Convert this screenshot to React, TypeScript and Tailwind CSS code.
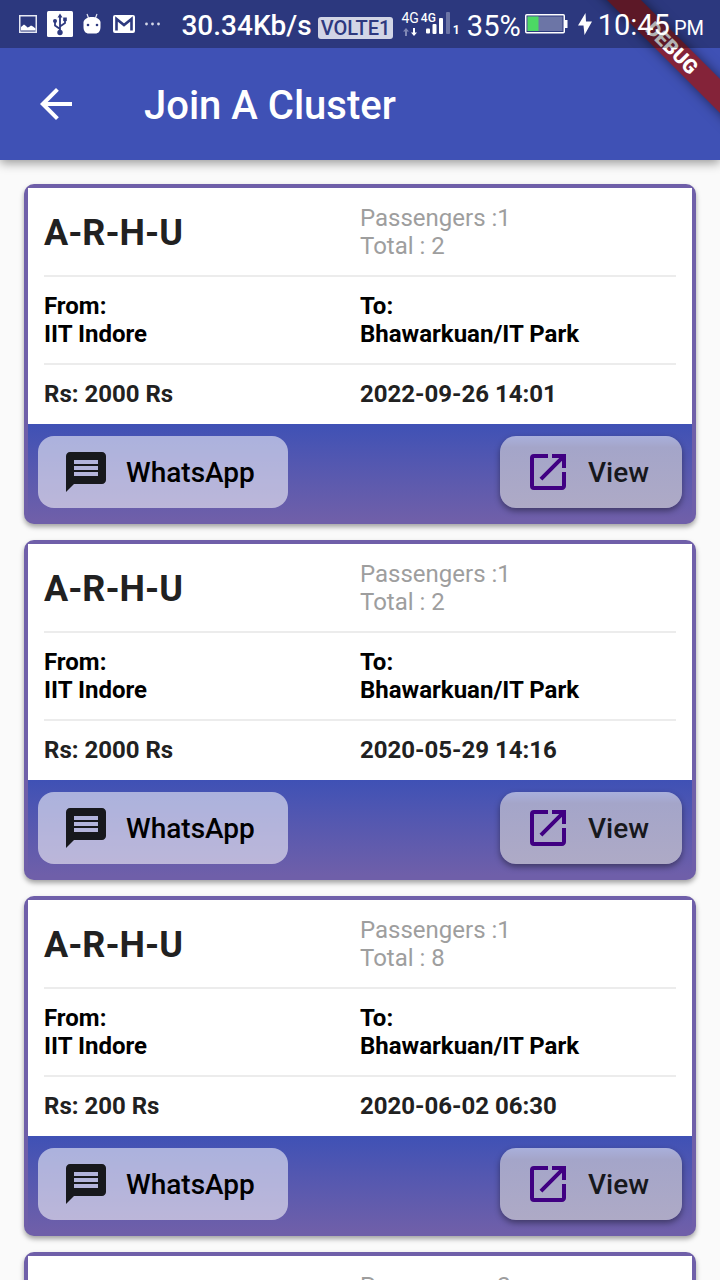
import { MdArrowBack, MdMessage, MdOpenInNew } from "react-icons/md";

type Cluster = {
  id: number;
  name: string;
  passengers: number;
  total: number;
  from: string;
  to: string;
  fare: number;
  time: string;
};

const clusters: Cluster[] = [
  { id: 1, name: "A-R-H-U", passengers: 1, total: 2, from: "IIT Indore", to: "Bhawarkuan/IT Park", fare: 2000, time: "2022-09-26 14:01" },
  { id: 2, name: "A-R-H-U", passengers: 1, total: 2, from: "IIT Indore", to: "Bhawarkuan/IT Park", fare: 2000, time: "2020-05-29 14:16" },
  { id: 3, name: "A-R-H-U", passengers: 1, total: 8, from: "IIT Indore", to: "Bhawarkuan/IT Park", fare: 200, time: "2020-06-02 06:30" },
  { id: 4, name: "A-R-H-U", passengers: 2, total: 8, from: "IIT Indore", to: "Bhawarkuan/IT Park", fare: 200, time: "2020-06-02 06:30" },
];

function NotificationIcons() {
  return (
    <div className="flex items-center">
      <svg width="18" height="18" viewBox="0 0 18 18" aria-hidden="true">
        <rect x="0.75" y="0.75" width="16.5" height="16.5" fill="none" stroke="#e6e8f3" strokeWidth="1.5" />
        <path d="M2 15.500v-3.500l3-2.500 2 1.500 1.500 1.500 1.500-.500 2-1.500 2 1 2.500 2v2z" fill="#fff" />
      </svg>
      <svg className="ml-2.5" width="26" height="26" viewBox="0 0 26 26" aria-hidden="true">
        <rect width="26" height="26" rx="1.5" fill="#fff" />
        <g stroke="#2d397f" strokeWidth="1.8" fill="none">
          <path d="M13 4v18M13 18l-5-3.500V10M13 15.500l5-3.500V8" />
        </g>
        <path d="M13 2.500l2.500 4h-5z" fill="#2d397f" />
        <circle cx="13" cy="21.500" r="2.700" fill="#2d397f" />
        <circle cx="8" cy="10" r="2" fill="#2d397f" />
        <rect x="16.200" y="6.500" width="3.600" height="3.600" fill="#2d397f" />
      </svg>
      <svg className="ml-2.5" width="18" height="22" viewBox="0 0 18 22" aria-hidden="true">
        <path d="M4 1l1.500 4M14 1l-1.500 4" stroke="#e6e8f3" strokeWidth="1.2" />
        <path d="M0.500 9C1.500 5.500 5 4 9 4s7.500 1.500 8.500 5v5c0 4.500-2.500 6.500-5 6.500h-7C3 20.500.500 18.500.500 14z" fill="#fff" />
        <circle cx="5" cy="12" r="1.300" fill="#2d397f" />
        <circle cx="14" cy="12" r="1.300" fill="#2d397f" />
      </svg>
      <svg className="ml-3" width="22" height="18" viewBox="0 0 22 18" aria-hidden="true">
        <rect width="22" height="18" rx="2" fill="#fff" />
        <path d="M3.500 15.500V4L11 10l7.500-6v11.500" fill="none" stroke="#2d397f" strokeWidth="2.600" />
      </svg>
      <svg className="ml-2.5" width="15" height="4" viewBox="0 0 15 4" aria-hidden="true">
        <circle cx="1.500" cy="2" r="1.400" fill="#d5d8e9" />
        <circle cx="7.500" cy="2" r="1.400" fill="#d5d8e9" />
        <circle cx="13.500" cy="2" r="1.400" fill="#d5d8e9" />
      </svg>
    </div>
  );
}

function SignalStrength() {
  return (
    <div className="flex">
      <div className="flex flex-col items-center">
        <span className="text-[14px] leading-3">4G</span>
        <svg className="mt-1" width="14" height="8" viewBox="0 0 14 8" aria-hidden="true">
          <path d="M3 0l3 3.500H4V8H2V3.500H0z" fill="#8088b5" />
          <path d="M11 8L8 4.500h2V0h2v4.500h2z" fill="#fff" />
        </svg>
      </div>
      <div className="relative ml-0.5 h-6 w-[46px]">
        <span className="absolute left-0 top-0 text-[12px] font-medium leading-3">4G</span>
        <svg className="absolute bottom-0.5 left-1" width="26" height="22" viewBox="0 0 26 22" aria-hidden="true">
          <rect x="1" y="16.500" width="4" height="5" rx="1" fill="#fff" />
          <rect x="7.500" y="12" width="4" height="10" rx="1" fill="#fff" />
          <rect x="14" y="6" width="4" height="16" rx="1" fill="#fff" />
          <rect x="21" y="0" width="4" height="22" rx="1" fill="#6c75a6" />
        </svg>
        <span className="absolute bottom-0.5 left-8 text-[12px] font-bold leading-2">1</span>
      </div>
    </div>
  );
}

function StatusBar() {
  return (
    <div className="relative z-20 flex h-12 items-center justify-between whitespace-nowrap bg-black/30 pl-[19px] pr-4 text-white">
      <NotificationIcons />
      <div className="flex items-center">
        <span className="pt-1 text-[28px] font-medium leading-8">30.34Kb/s</span>
        <span className="ml-1.5 mt-2 flex h-[22px] items-center rounded-[3px] bg-[#d2d5e6] px-[3px] text-[20px] font-medium leading-5 text-[#2d397f]">VOLTE1</span>
        <div className="ml-2">
          <SignalStrength />
        </div>
        <span className="pt-1 text-[29px] leading-8">35%</span>
        <svg className="ml-1" width="43" height="20" viewBox="0 0 43 20" aria-hidden="true">
          <rect x="0.750" y="0.750" width="38.500" height="18" rx="1" fill="none" stroke="#fff" strokeWidth="1.500" />
          <rect x="2.500" y="2.500" width="35" height="14.500" fill="#6c75a6" />
          <rect x="2.500" y="2.500" width="11" height="14.500" fill="#4cd964" />
          <rect x="39.500" y="6" width="3" height="8" fill="#fff" />
        </svg>
        <svg className="ml-2.5" width="14" height="22" viewBox="0 0 14 22" aria-hidden="true">
          <path d="M7.500 0L0 12.500h5.500L6.500 22 14 8.500H8z" fill="#fff" />
        </svg>
        <time className="ml-1.5 flex items-baseline gap-1 pt-1 text-[29px] leading-8">
          10:45 <span className="text-[20px]">PM</span>
        </time>
      </div>
    </div>
  );
}

function DebugRibbon() {
  return (
    <div className="pointer-events-none absolute right-0 top-0 z-10 size-40 overflow-hidden">
      <div className="absolute -right-[52px] top-9 flex h-6 w-50 rotate-45 items-center justify-center bg-[#842339] shadow-[0_0_12px_rgba(0,0,0,0.5)]">
        <span className="text-[20px] font-black leading-6 text-white">DEBUG</span>
      </div>
    </div>
  );
}

function ClusterCard({ cluster }: { cluster: Cluster }) {
  return (
    <article className="shrink-0 overflow-hidden rounded-[10px] bg-[#6f5fa9] p-1 shadow-[0_3px_5px_rgba(0,0,0,0.35)]">
      <div className="bg-white px-4 text-[24px] leading-7 text-[#212121]">
        <div className="grid h-[89px] grid-cols-2 items-center border-b-2 border-[#ececec] pt-px">
          <h2 className="pt-0.5 text-[36px] font-bold leading-10">{cluster.name}</h2>
          <p className="text-[#9e9e9e]">
            Passengers :{cluster.passengers}
            <br />
            Total : {cluster.total}
          </p>
        </div>
        <div className="grid h-22 grid-cols-2 items-center border-b-2 border-[#ececec] font-bold text-black">
          <p>
            From:
            <br />
            {cluster.from}
          </p>
          <p>
            To:
            <br />
            {cluster.to}
          </p>
        </div>
        <div className="grid h-[59px] grid-cols-2 items-center pb-px font-bold">
          <p>Rs: {cluster.fare} Rs</p>
          <p>{cluster.time}</p>
        </div>
      </div>
      <div className="flex justify-between bg-linear-to-b from-[#3f51b5] to-[#6f5fa9] px-2.5 py-3 text-[28px] font-medium">
        <button type="button" className="flex h-18 items-center gap-4 rounded-2xl bg-white/55 pl-6 pr-[33px] text-black">
          <MdMessage className="size-12 text-[#17181c]" aria-hidden="true" />
          <span className="pt-0.5">WhatsApp</span>
        </button>
        <button type="button" className="flex h-18 items-center gap-4 rounded-2xl bg-[linear-gradient(#a9b0dc,#a4a5c9_16%,#aeaac6)] pl-6 pr-[33px] text-[#17181c] shadow-[0_3px_6px_rgba(0,0,0,0.4)]">
          <MdOpenInNew className="size-12 text-[#400082]" aria-hidden="true" />
          <span className="pt-0.5">View</span>
        </button>
      </div>
    </article>
  );
}

export default function App() {
  return (
    <div className="flex h-screen flex-col overflow-hidden bg-[#fafafa] font-['Roboto',sans-serif]">
      <header className="relative z-10 shrink-0 bg-[#3f51b5] text-white shadow-[0_3px_10px_rgba(0,0,0,0.4)]">
        <StatusBar />
        <DebugRibbon />
        <div className="flex h-28 items-center gap-16 px-8">
          <button type="button" aria-label="Back">
            <MdArrowBack className="size-12" aria-hidden="true" />
          </button>
          <h1 className="pt-1 text-[40px] font-medium leading-12">Join A Cluster</h1>
        </div>
      </header>
      <main className="flex min-h-0 flex-1 flex-col gap-4 overflow-y-auto px-6 py-6 [scrollbar-width:none]">
        {clusters.map((cluster) => (
          <ClusterCard key={cluster.id} cluster={cluster} />
        ))}
      </main>
    </div>
  );
}
